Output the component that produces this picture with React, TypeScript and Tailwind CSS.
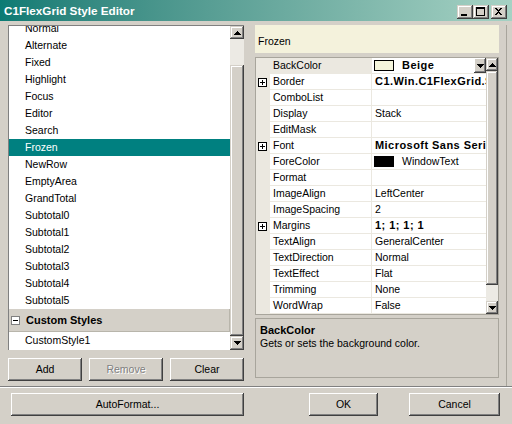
import React from 'react';

const builtInStyles = [
  'Normal', 'Alternate', 'Fixed', 'Highlight', 'Focus', 'Editor', 'Search', 'Frozen',
  'NewRow', 'EmptyArea', 'GrandTotal', 'Subtotal0', 'Subtotal1', 'Subtotal2',
  'Subtotal3', 'Subtotal4', 'Subtotal5',
];

type StyleProp = { name: string; value?: string; bold?: boolean; expand?: boolean; swatch?: string };

const styleProps: StyleProp[] = [
  { name: 'BackColor', value: 'Beige', bold: true, swatch: '#f5f5dc' },
  { name: 'Border', value: 'C1.Win.C1FlexGrid.Styles.CellBorder', bold: true, expand: true },
  { name: 'ComboList' },
  { name: 'Display', value: 'Stack' },
  { name: 'EditMask' },
  { name: 'Font', value: 'Microsoft Sans Serif, 8.25pt', bold: true, expand: true },
  { name: 'ForeColor', value: 'WindowText', swatch: '#000000' },
  { name: 'Format' },
  { name: 'ImageAlign', value: 'LeftCenter' },
  { name: 'ImageSpacing', value: '2' },
  { name: 'Margins', value: '1; 1; 1; 1', bold: true, expand: true },
  { name: 'TextAlign', value: 'GeneralCenter' },
  { name: 'TextDirection', value: 'Normal' },
  { name: 'TextEffect', value: 'Flat' },
  { name: 'Trimming', value: 'None' },
  { name: 'WordWrap', value: 'False' },
];

// classic 3d edges
const pushEdge =
  'shadow-[inset_-1px_-1px_0_#404040,inset_1px_1px_0_#fff,inset_-2px_-2px_0_#808080,inset_2px_2px_0_#d4d0c8]';
const scrollEdge =
  'shadow-[inset_-1px_-1px_0_#404040,inset_1px_1px_0_#d4d0c8,inset_-2px_-2px_0_#808080,inset_2px_2px_0_#fff]';

const ArrowUp = () => (
  <svg width="7" height="4" viewBox="0 0 7 4" shapeRendering="crispEdges">
    <path d="M3 0h1v1h1v1h1v1h1v1H0V3h1V2h1V1h1z" fill="#000" />
  </svg>
);

const ArrowDown = () => (
  <svg width="7" height="4" viewBox="0 0 7 4" shapeRendering="crispEdges">
    <path d="M0 0h7v1H6v1H5v1H4v1H3V3H2V2H1V1H0z" fill="#000" />
  </svg>
);

const TitleButton: React.FC<{ kind: 'min' | 'max' | 'close'; className?: string }> = ({ kind, className = '' }) => (
  <div className={`flex h-[14px] w-[16px] items-center justify-center bg-[#d4d0c8] ${scrollEdge} ${className}`}>
    <svg width="16" height="14" viewBox="0 0 16 14" shapeRendering="crispEdges">
      {kind === 'min' && <rect x="4" y="9" width="6" height="2" fill="#000" />}
      {kind === 'max' && (
        <path d="M3 2h9v9H3zM4 4v6h7V4z" fill="#000" fillRule="evenodd" />
      )}
      {kind === 'close' && (
        <path
          d="M4 3h2v1h1v1h1V4h1V3h2v1h-1v1H9v1H8v1h1v1h1v1h1v1H9V9H8V8H7v1H6v1H4V9h1V8h1V7h1V6H6V5H5V4H4z"
          fill="#000"
        />
      )}
    </svg>
  </div>
);

const PushButton: React.FC<{ className?: string; disabled?: boolean; children: React.ReactNode }> = ({
  className = '',
  disabled,
  children,
}) => (
  <div className={`flex h-[23px] items-center justify-center bg-[#d4d0c8] ${pushEdge} ${className}`}>
    <span className={disabled ? 'text-[#808080] [text-shadow:1px_1px_0_#fff]' : ''}>{children}</span>
  </div>
);

const TreeBox: React.FC<{ open?: boolean }> = ({ open }) => (
  <svg width="9" height="9" viewBox="0 0 9 9" shapeRendering="crispEdges">
    <rect x="0.5" y="0.5" width="8" height="8" fill="#fff" stroke={open ? '#808080' : '#000'} />
    <rect x="2" y="4" width="5" height="1" fill="#000" />
    {!open && <rect x="4" y="2" width="1" height="5" fill="#000" />}
  </svg>
);

const StyleList = () => (
  <div className="mt-[4px] flex h-[325px] border-l border-t border-[#808080] bg-white">
    <div className="flex-1 overflow-hidden">
      {/* list is scrolled a few pixels down, so the first item is cut at the top */}
      <div className="-mt-[6px]">
        {builtInStyles.map((s) => (
          <div
            key={s}
            className={`h-[17px] pl-[16px] leading-[17px] ${s === 'Frozen' ? 'bg-[#008080] text-white' : ''}`}
          >
            {s}
          </div>
        ))}
        <div className="flex h-[23px] items-center border-b border-r border-[#b8b5ab] bg-[#d4d0c8] pl-[2px]">
          <TreeBox open />
          <span className="ml-[6px] text-[11px] font-bold">Custom Styles</span>
        </div>
        <div className="h-[17px] pl-[16px] leading-[17px]">CustomStyle1</div>
      </div>
    </div>
    {/* vertical scrollbar */}
    <div className="flex w-[14px] flex-col">
      <div className={`flex h-[13px] items-center justify-center bg-[#d4d0c8] ${scrollEdge}`}>
        <ArrowUp />
      </div>
      <div className="h-[26px] bg-[#eceae4]" />
      <div className={`flex-1 bg-[#d4d0c8] ${scrollEdge}`} />
      <div className={`flex h-[14px] items-center justify-center bg-[#d4d0c8] ${scrollEdge}`}>
        <ArrowDown />
      </div>
    </div>
  </div>
);

const PropertyRow: React.FC<{ p: StyleProp; selected?: boolean }> = ({ p, selected }) => (
  <div className="flex h-[16px]">
    <div className="flex w-[14px] items-center bg-[#ebe8e0] pl-[2px]">{p.expand && <TreeBox />}</div>
    <div
      className={`w-[102px] border-b border-r border-[#ebe8e0] pl-[3px] leading-[15px] ${selected ? 'bg-[#ebe8e0]' : ''}`}
    >
      {p.name}
    </div>
    <div className="flex w-[114px] items-center overflow-hidden whitespace-nowrap border-b border-[#ebe8e0] pl-[1px]">
      {p.swatch && <div className="ml-px h-[11px] w-[20px] shrink-0 border border-black" style={{ background: p.swatch }} />}
      {p.value && (
        <span
          className={`${p.swatch ? 'ml-[8px]' : 'ml-[2px]'} ${p.bold ? 'text-[11px] font-bold tracking-[0.45px]' : ''}`}
        >
          {p.value}
        </span>
      )}
      {selected && (
        <div className={`ml-auto flex h-[15px] w-[12px] shrink-0 items-center justify-center bg-[#d4d0c8] ${pushEdge}`}>
          <ArrowDown />
        </div>
      )}
    </div>
  </div>
);

const PropertyGrid = () => (
  <div className="mt-[4px] flex h-[258px] border border-[#a8a59c] bg-white">
    <div className="flex w-[230px] flex-col">
      {styleProps.map((p, i) => (
        <PropertyRow key={p.name} p={p} selected={i === 0} />
      ))}
    </div>
    <div className="flex w-[12px] flex-col">
      <div className={`flex h-[13px] items-center justify-center bg-[#d4d0c8] ${scrollEdge}`}>
        <ArrowUp />
      </div>
      <div className={`h-[214px] bg-[#d4d0c8] ${scrollEdge}`} />
      <div className="flex-1 bg-[#eceae4]" />
      <div className={`flex h-[13px] items-center justify-center bg-[#d4d0c8] ${scrollEdge}`}>
        <ArrowDown />
      </div>
    </div>
  </div>
);

export default function App() {
  return (
    <div className="flex h-[424px] w-[512px] select-none flex-col overflow-hidden bg-[#d4d0c8] font-['Liberation_Sans',Arial,sans-serif] text-[10.5px] text-black">
      {/* title bar */}
      <div className="flex h-[21px] items-start bg-linear-to-r from-[#0a7b74] to-[#a6d2c4] pl-[4px] pr-[5px]">
        <span className="mt-[3px] text-[11.7px] font-bold leading-[15px] text-white">C1FlexGrid Style Editor</span>
        <div className="ml-auto mt-[5px] flex">
          <TitleButton kind="min" />
          <TitleButton kind="max" />
          <TitleButton kind="close" className="ml-[2px]" />
        </div>
      </div>

      <div className="flex h-[365px]">
        {/* styles list */}
        <div className="ml-[8px] flex w-[236px] flex-col">
          <StyleList />
          <div className="mt-[8px] flex gap-[7px]">
            <PushButton className="w-[74px]">Add</PushButton>
            <PushButton className="w-[74px]" disabled>
              Remove
            </PushButton>
            <PushButton className="w-[74px]">Clear</PushButton>
          </div>
        </div>

        {/* style properties */}
        <div className="ml-[11px] flex w-[244px] flex-col">
          <div className="mt-[4px] h-[28px] bg-[#f4f2dc] pl-[3px] pt-[10px] leading-[13px]">Frozen</div>
          <PropertyGrid />
          <div className="mt-[3px] h-[60px] border border-[#a8a59c] pl-[4px] pt-[5px] leading-[13px]">
            <div className="text-[11px] font-bold">BackColor</div>
            <div>Gets or sets the background color.</div>
          </div>
        </div>

        <div className="ml-[7px] mt-[4px] w-px bg-[#a8a59c]" />
      </div>

      <div className="h-px bg-[#808080]" />
      <div className="h-px bg-white" />

      <div className="mt-[5px] flex">
        <PushButton className="ml-[11px] w-[233px]">AutoFormat...</PushButton>
        <PushButton className="ml-[65px] w-[69px]">OK</PushButton>
        <PushButton className="ml-[31px] w-[91px]">Cancel</PushButton>
      </div>
    </div>
  );
}
